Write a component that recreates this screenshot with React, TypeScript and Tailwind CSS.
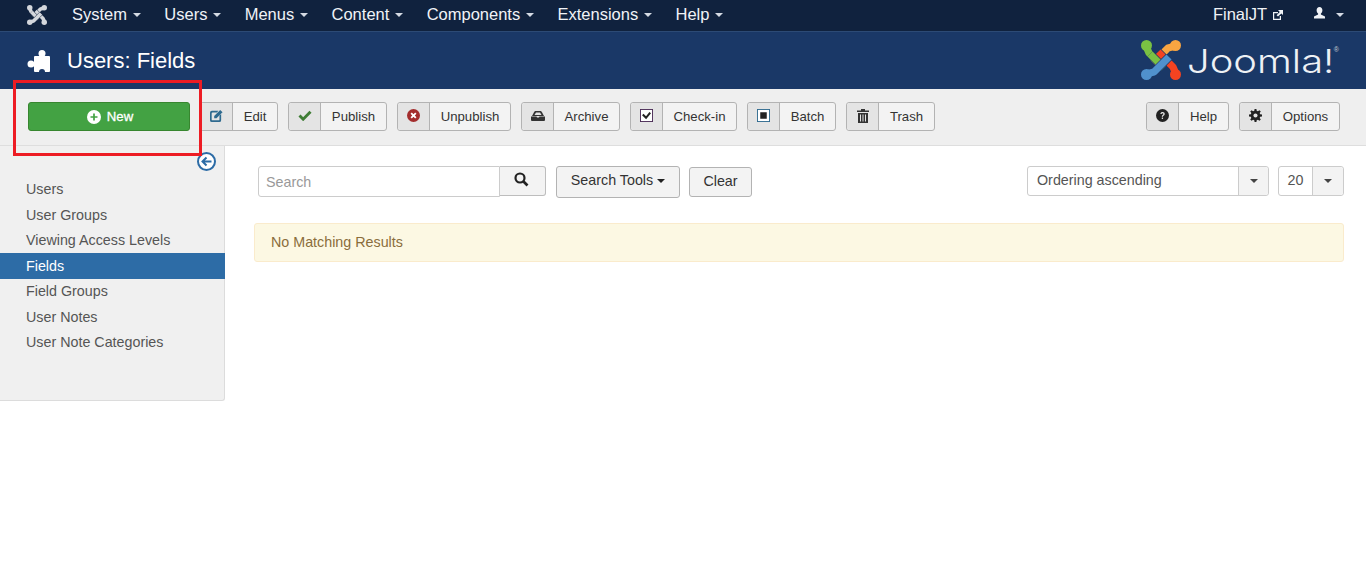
import React from "react";

const caret = (c: string) => (
  <span className={`inline-block h-0 w-0 border-x-[4.5px] border-t-[4.5px] border-x-transparent ${c}`} />
);

function JoomlaMark({ size, colored }: { size: number; colored?: boolean }) {
  const g = colored ? "#7ac143" : "#d4d7dc";
  const o = colored ? "#f9a541" : "#d4d7dc";
  const r = colored ? "#f44321" : "#d4d7dc";
  const b = colored ? "#5091cd" : "#d4d7dc";
  const bg = colored ? "#1a3867" : "#10223e";
  const arm = { fill: "none", strokeLinecap: "butt" as const, strokeLinejoin: "round" as const };
  const band = (d: string, c: string) => (
    <>
      <path d={d} stroke={bg} strokeWidth={8.6} {...arm} />
      <path d={d} stroke={c} strokeWidth={7.2} {...arm} />
    </>
  );
  return (
    <svg width={size} height={size} viewBox="0 0 40 40">
      {band("M5 6 L8 13 L23 28", g)}
      {band("M35 6 L27 8 L12 23", o)}
      {band("M35 34 L32 27 L17 12", r)}
      {band("M5 34 L13 32 L28 17", b)}
      {band("M9 14 L17 22", g)}
      <circle cx="5.5" cy="5.5" r="5.5" fill={g} />
      <circle cx="34.5" cy="5.5" r="5.5" fill={o} />
      <circle cx="34.5" cy="34.5" r="5.5" fill={r} />
      <circle cx="5.5" cy="34.5" r="5.5" fill={b} />
    </svg>
  );
}

const Icon = {
  edit: (
    <svg width="13" height="13" viewBox="0 0 14 14">
      <path d="M2 2h7L7.5 3.800H2.800a1 1 0 0 0-1 1v6.400a1 1 0 0 0 1 1h6.400a1 1 0 0 0 1-1V7L12 5.300V12a2 2 0 0 1-2 2H2a2 2 0 0 1-2-2V4a2 2 0 0 1 2-2z" fill="#2f6a8f" />
      <path d="M4.500 7.500L11 1l2.500 2.500L7 10H4.500z" fill="#2f6a8f" />
    </svg>
  ),
  check: (
    <svg width="14" height="11" viewBox="0 0 15 12">
      <path d="M1.500 6l4 4L13.500 2" fill="none" stroke="#3f7d35" strokeWidth="3.200" />
    </svg>
  ),
  x: (
    <svg width="13" height="13" viewBox="0 0 14 14">
      <circle cx="7" cy="7" r="7" fill="#a32d2d" />
      <path d="M4.500 4.500l5 5M9.500 4.500l-5 5" stroke="#fff" strokeWidth="2" />
    </svg>
  ),
  archive: (
    <svg width="14" height="10" viewBox="0 0 14 10">
      <path d="M5 0h4c1 0 1.600.4 2 1.200L13 5H1l2-3.800C3.400.4 4 0 5 0z" fill="#333" />
      <path d="M5 1.500h4L10.500 4h-7z" fill="#e4e4e4" />
      <path d="M0 5.500h5.500l.5 1h2l.5-1H14V9a1 1 0 0 1-1 1H1a1 1 0 0 1-1-1z" fill="#333" />
    </svg>
  ),
  checkin: (
    <svg width="13" height="13" viewBox="0 0 14 14">
      <rect x="0.500" y="0.500" width="13" height="13" fill="#fff" stroke="#4a2a55" />
      <path d="M3 6l3.500 3.500L11 4" fill="none" stroke="#222" strokeWidth="2.200" />
    </svg>
  ),
  batch: (
    <svg width="13" height="13" viewBox="0 0 14 14">
      <rect x="0.500" y="0.500" width="13" height="13" fill="#fff" stroke="#2f6a8f" />
      <rect x="3.500" y="3.500" width="7" height="7" fill="#222" />
    </svg>
  ),
  trash: (
    <svg width="12" height="14" viewBox="0 0 12 14">
      <path d="M4 0h4v1.500h4V3H0V1.500h4z" fill="#333" />
      <path d="M1 4h10v10H1zM3 5.500v7h1v-7zM5.500 5.500v7h1v-7zM8 5.500v7h1v-7z" fill="#333" fillRule="evenodd" />
    </svg>
  ),
  help: (
    <svg width="13" height="13" viewBox="0 0 14 14">
      <circle cx="7" cy="7" r="7" fill="#222" />
      <path d="M4.700 5.400C4.900 4 5.900 3.300 7.100 3.300c1.300 0 2.300.8 2.300 2 0 1.600-1.900 1.600-1.900 3H6.200c0-2 1.800-2 1.800-3 0-.5-.4-.8-.9-.8-.6 0-1 .4-1.100 1z" fill="#e4e4e4" />
      <rect x="6.200" y="9.200" width="1.400" height="1.500" fill="#e4e4e4" />
    </svg>
  ),
  gear: (
    <svg width="13" height="13" viewBox="0 0 14 14">
      <path d="M6 0h2l.3 2 1.300.5 1.600-1.200 1.500 1.500-1.200 1.600.5 1.300 2 .3v2l-2 .3-.5 1.300 1.200 1.600-1.500 1.500-1.600-1.200-1.300.5L8 14H6l-.3-2-1.300-.5-1.600 1.200-1.500-1.500 1.200-1.600L2 8.300 0 8V6l2-.3.5-1.300-1.200-1.600 1.500-1.500 1.600 1.200L5.700 2z" fill="#222" />
      <circle cx="7" cy="7" r="2.200" fill="#e4e4e4" />
    </svg>
  ),
};

function ToolBtn({ icon, label, w }: { icon: React.ReactNode; label: string; w: string }) {
  return (
    <div className={`flex h-[29px] items-stretch rounded-[3px] border border-[#b3b3b3] bg-[#f3f3f3] text-[13.2px] leading-none text-[#333] ${w}`}>
      <span className="flex w-[32px] shrink-0 items-center justify-center rounded-l-[3px] border-r border-[#b3b3b3] bg-[#e4e4e4] pb-[2px]">{icon}</span>
      <span className="flex flex-1 items-center justify-center">{label}</span>
    </div>
  );
}

const nav = ["System", "Users", "Menus", "Content", "Components", "Extensions", "Help"];
const side = ["Users", "User Groups", "Viewing Access Levels", "Fields", "Field Groups", "User Notes", "User Note Categories"];

export default function App() {
  return (
    <div className="relative h-[579px] w-[1366px] overflow-hidden bg-white font-['Liberation_Sans',Arial,sans-serif]">
      <header className="flex h-[32px] items-center border-b border-[#2c4a75] bg-[#10223e] pb-[2px] text-[16.5px] text-[#f0f3f7]">
        <span className="ml-[26px] mr-[25px] flex w-[21px] justify-center"><JoomlaMark size={20} /></span>
        <nav className="flex gap-[23.3px]">
          {nav.map((n) => (
            <span key={n} className="flex items-center gap-[6px]">{n}{caret("border-t-[#d5dbe4]")}</span>
          ))}
        </nav>
        <div className="ml-auto mr-[22px] flex items-center">
          <span className="flex items-center gap-[5px]">FinalJT
            <svg width="12" height="12" viewBox="0 0 12 12"><path d="M1 3h5v1.200H2.200v5.600h5.600V7H9v4H1z" fill="#f0f3f7" /><path d="M6 1h5v5L9.400 4.400 6 7.600 4.600 6.200 7.800 3z" fill="#f0f3f7" /></svg>
          </span>
          <svg className="ml-[29px] mt-[-3px]" width="13" height="13" viewBox="0 0 13 13"><path d="M6.500 0C8.300 0 9.400 1.400 9.400 3.300c0 1.500-.7 2.700-1.500 3.300v1l4.100 2v2H1v-2l4.100-2v-1C4.300 6 3.600 4.800 3.600 3.300 3.600 1.400 4.700 0 6.500 0z" fill="#f0f3f7" /></svg>
          <span className="ml-[10px] flex">{caret("border-t-[#d5dbe4]")}</span>
        </div>
      </header>

      <div className="flex h-[57px] items-center bg-[#1a3867] pl-[27px] pr-[27px]">
        <svg width="24" height="24" viewBox="0 0 24 24">
          <rect x="7" y="7" width="16" height="16" rx="1" fill="#fff" />
          <circle cx="15" cy="4.500" r="3.500" fill="#fff" />
          <circle cx="4" cy="15" r="3.500" fill="#fff" />
          <circle cx="15" cy="23" r="3" fill="#1a3867" />
        </svg>
        <h1 className="ml-[16px] text-[22px] leading-none text-white">Users: Fields</h1>
        <div className="ml-auto mt-[-2px] flex items-center">
          <JoomlaMark size={40} colored />
          <span className="ml-[6px] mt-[4px] w-[147px] origin-left scale-x-[1.21] whitespace-nowrap font-['Inter',sans-serif] text-[33px] font-light leading-none text-[#eef1f5]">Joomla!</span>
          <span className="mb-[18px] text-[7px] text-[#c9cdd4]">®</span>
        </div>
      </div>

      <div className="flex h-[57px] items-center border-b border-[#dedede] bg-[#efefef] pb-[1px] pl-[28px] pr-[26px]">
        <div className="mr-[10px] flex h-[29px] w-[162px] items-center justify-center gap-[6px] rounded-[3px] border border-[#37862f] bg-[#43a243] pl-[2px] text-[13.2px] text-white">
          <svg width="14" height="14" viewBox="0 0 14 14"><circle cx="7" cy="7" r="7" fill="#fff" /><path d="M7 3.500v7M3.500 7h7" stroke="#43a243" strokeWidth="1.700" /></svg>
          <span className="[-webkit-text-stroke:0.3px_white]">New</span>
        </div>
        <div className="flex gap-[10px]">
          <ToolBtn icon={Icon.edit} label="Edit" w="w-[78px]" />
          <ToolBtn icon={Icon.check} label="Publish" w="w-[99px]" />
          <ToolBtn icon={Icon.x} label="Unpublish" w="w-[114px]" />
          <ToolBtn icon={Icon.archive} label="Archive" w="w-[99px]" />
          <ToolBtn icon={Icon.checkin} label="Check-in" w="w-[107px]" />
          <ToolBtn icon={Icon.batch} label="Batch" w="w-[89px]" />
          <ToolBtn icon={Icon.trash} label="Trash" w="w-[89px]" />
        </div>
        <div className="ml-auto flex gap-[10px]">
          <ToolBtn icon={Icon.help} label="Help" w="w-[83px]" />
          <ToolBtn icon={Icon.gear} label="Options" w="w-[101px]" />
        </div>
      </div>

      <div className="flex items-start">
        <aside className="relative h-[255px] w-[225px] shrink-0 rounded-br-[3px] border-b border-r border-[#dcdcdc] bg-[#f0f0f0] pt-[30.5px] text-[14.3px] text-[#555]">
          <ul>
            {side.map((s) => (
              <li key={s} className={`mr-[-1px] flex h-[25.6px] items-center pl-[26px] pt-[0.7px] ${s === "Fields" ? "bg-[#2d6ca6] text-white" : ""}`}>{s}</li>
            ))}
          </ul>
          <span className="absolute right-[8px] top-[6px] flex h-[19px] w-[19px] items-center justify-center rounded-full border-2 border-[#2d6ca6] bg-white">
            <svg width="11" height="11" viewBox="0 0 11 11"><path d="M10.500 5.500H2M5.500 1.500l-4 4 4 4" fill="none" stroke="#2d6ca6" strokeWidth="2" /></svg>
          </span>
        </aside>
        <main className="flex-1 pl-[33px] pr-[22px] pt-[20px]">
          <div className="flex items-start">
            <div className="relative z-10 h-[31px] w-[242px] rounded-l-[3px] border border-[#ccc] bg-white pl-[7px] text-[14.3px] leading-[30px] text-[#999]">Search</div>
            <div className="flex h-[30px] w-[46px] items-center justify-center rounded-r-[3px] border border-l-0 border-[#bdbdbd] bg-[#f3f3f3] pb-[3px] pr-[2px]">
              <svg width="15" height="15" viewBox="0 0 15 15"><circle cx="6" cy="6" r="4.500" fill="none" stroke="#222" strokeWidth="2.200" /><path d="M9.500 9.500l4 4" stroke="#222" strokeWidth="2.600" /></svg>
            </div>
            <div className="ml-[10px] flex h-[32px] w-[124px] items-center justify-center gap-[4px] rounded-[3px] border border-[#b3b3b3] bg-[#f3f3f3] pb-[3px] text-[14.3px] text-[#333]">Search Tools {caret("border-t-[#222]")}</div>
            <div className="ml-[9px] mt-[1px] flex h-[30px] w-[63px] items-center justify-center rounded-[3px] border border-[#b3b3b3] bg-[#f3f3f3] text-[14.3px] text-[#333]">Clear</div>
            <div className="ml-auto flex h-[30px] w-[242px] rounded-[3px] border border-[#ccc] bg-white text-[14.3px] text-[#555]">
              <span className="flex flex-1 items-center pl-[9px]">Ordering ascending</span>
              <span className="flex w-[30px] items-center justify-center rounded-r-[3px] border-l border-[#ccc] bg-[#f3f3f3]">{caret("border-t-[#444]")}</span>
            </div>
            <div className="ml-[9px] flex h-[30px] w-[66px] rounded-[3px] border border-[#ccc] bg-white text-[14.3px] text-[#555]">
              <span className="flex flex-1 items-center justify-center">20</span>
              <span className="flex w-[31px] items-center justify-center rounded-r-[3px] border-l border-[#ccc] bg-[#f3f3f3]">{caret("border-t-[#444]")}</span>
            </div>
          </div>
          <div className="ml-[-4px] mt-[25px] flex h-[39px] items-center rounded-[3px] border border-[#faebcc] bg-[#fcf8e3] pl-[16px] text-[14.3px] text-[#8a6d3b]">No Matching Results</div>
        </main>
      </div>

      <div className="pointer-events-none absolute left-[13px] top-[80px] h-[76px] w-[189px] border-[3px] border-[#ed1c24]" />
    </div>
  );
}
